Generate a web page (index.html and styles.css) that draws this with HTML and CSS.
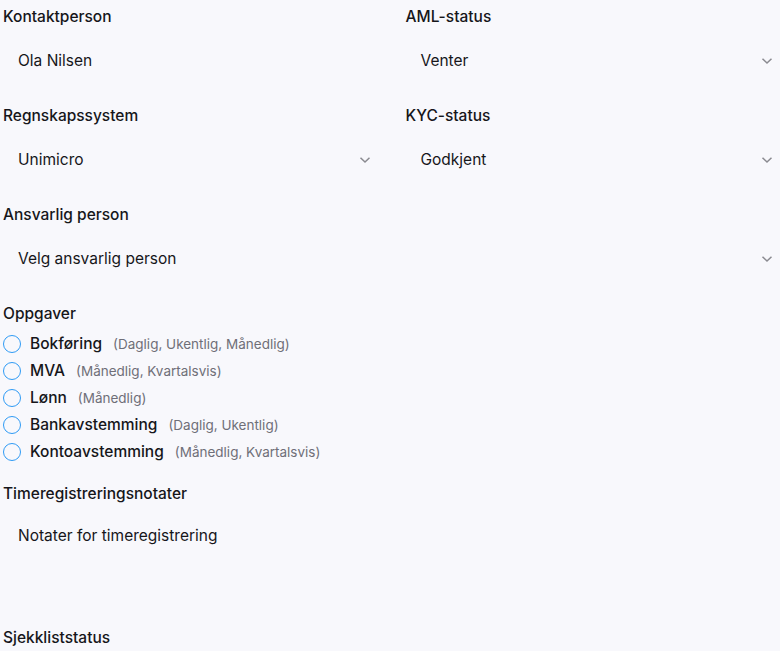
FILE: index.html
```html
<!DOCTYPE html>
<html lang="no">
<head>
<meta charset="utf-8">
<title>Kunde</title>
<link rel="stylesheet" href="styles.css">
</head>
<body>
<div class="form">
  <div class="grid">
    <div class="field">
      <div class="label">Kontaktperson</div>
      <div class="control"><span>Ola Nilsen</span></div>
    </div>
    <div class="field">
      <div class="label">AML-status</div>
      <div class="control"><span>Venter</span><svg class="chev" width="12" height="8" viewBox="0 0 12 8"><path d="M1.5 1.8 L6 6 L10.5 1.8" fill="none" stroke="#8a8a90" stroke-width="1.5"/></svg></div>
    </div>
    <div class="field">
      <div class="label">Regnskapssystem</div>
      <div class="control"><span>Unimicro</span><svg class="chev" width="12" height="8" viewBox="0 0 12 8"><path d="M1.5 1.8 L6 6 L10.5 1.8" fill="none" stroke="#8a8a90" stroke-width="1.5"/></svg></div>
    </div>
    <div class="field">
      <div class="label">KYC-status</div>
      <div class="control"><span>Godkjent</span><svg class="chev" width="12" height="8" viewBox="0 0 12 8"><path d="M1.5 1.8 L6 6 L10.5 1.8" fill="none" stroke="#8a8a90" stroke-width="1.5"/></svg></div>
    </div>
    <div class="field wide">
      <div class="label">Ansvarlig person</div>
      <div class="control"><span>Velg ansvarlig person</span><svg class="chev" width="12" height="8" viewBox="0 0 12 8"><path d="M1.5 1.8 L6 6 L10.5 1.8" fill="none" stroke="#8a8a90" stroke-width="1.5"/></svg></div>
    </div>
  </div>

  <div class="field section">
    <div class="label">Oppgaver</div>
    <ul class="tasks">
      <li><span class="radio"></span><span class="name">Bokføring</span><span class="hint">(Daglig, Ukentlig, Månedlig)</span></li>
      <li><span class="radio"></span><span class="name">MVA</span><span class="hint">(Månedlig, Kvartalsvis)</span></li>
      <li><span class="radio"></span><span class="name">Lønn</span><span class="hint">(Månedlig)</span></li>
      <li><span class="radio"></span><span class="name">Bankavstemming</span><span class="hint">(Daglig, Ukentlig)</span></li>
      <li><span class="radio"></span><span class="name">Kontoavstemming</span><span class="hint">(Månedlig, Kvartalsvis)</span></li>
    </ul>
  </div>

  <div class="field section-tight">
    <div class="label">Timeregistreringsnotater</div>
    <div class="textarea">Notater for timeregistrering</div>
  </div>

  <div class="field section">
    <div class="label">Sjekkliststatus</div>
  </div>
</div>
</body>
</html>
```

FILE: styles.css
```css
html, body {
  margin: 0;
  padding: 0;
  background: #f8f8fc;
}
body {
  font-family: Inter, "Noto Sans", "Liberation Sans", sans-serif;
  color: #16161a;
  font-size: 15.5px;
}
.form {
  padding: 7px 0 0 3px;
}
.grid {
  display: grid;
  grid-template-columns: 1fr 1fr;
  column-gap: 28px;
  row-gap: 21px;
}
.wide {
  grid-column: 1 / span 2;
}
.label {
  font-weight: 500;
  line-height: 20px;
  height: 20px;
}
.control {
  margin-top: 10px;
  height: 48px;
  display: flex;
  align-items: center;
  justify-content: space-between;
  padding: 0 7px 0 15px;
  line-height: 20px;
}
.chev {
  display: block;
}
.section {
  margin-top: 21px;
}
.section-tight {
  margin-top: 19px;
}
.tasks {
  list-style: none;
  margin: 6px 0 0 0;
  padding: 0;
}
.tasks li {
  display: flex;
  align-items: center;
  height: 27px;
}
.radio {
  width: 16px;
  height: 16px;
  border: 1.5px solid #2f9bf5;
  border-radius: 50%;
  margin-left: 0;
  margin-right: 9px;
  flex: none;
}
.name {
  font-weight: 500;
  margin-right: 11px;
}
.hint {
  font-size: 13.5px;
  color: #6f6f78;
}
.textarea {
  margin-top: 10px;
  height: 93px;
  box-sizing: border-box;
  padding: 12px 15px;
  line-height: 20px;
}
```
